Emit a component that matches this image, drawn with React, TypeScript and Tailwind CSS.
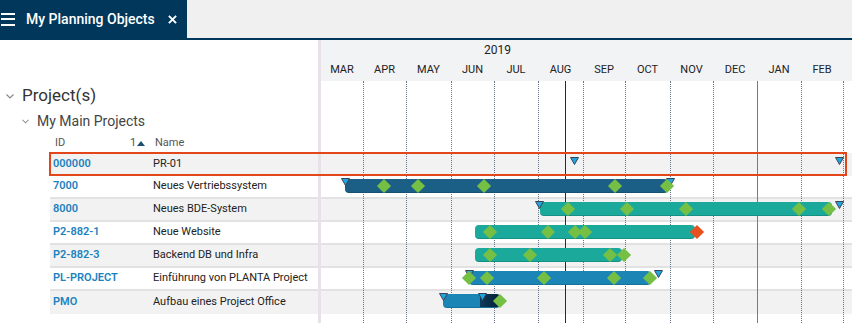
const NAVY = "#00375b";
const TEAL = "#1ba99c";
const BLUE = "#1b86b6";
const DARK = "#1b5e86";

const months: [string, number][] = [
  ["MAR", 42],
  ["APR", 43],
  ["MAY", 45],
  ["JUN", 43],
  ["JUL", 44],
  ["AUG", 45],
  ["SEP", 42],
  ["OCT", 45],
  ["NOV", 43],
  ["DEC", 44],
  ["JAN", 44],
  ["FEB", 42],
  ["", 9],
];

// month boundaries in gantt coordinates
const gridLines = months.slice(0, -1).reduce<number[]>((acc, [, w]) => {
  acc.push((acc[acc.length - 1] ?? 0) + w);
  return acc;
}, []);

type Row = {
  id: string;
  name: string;
  bar?: { left: number; width: number; color: string };
  fade?: boolean;
  tris?: number[];
  triTop?: number;
  dias?: number[];
  reds?: number[];
};

const rows: Row[] = [
  { id: "000000", name: "PR-01", tris: [253, 518], triTop: 4 },
  {
    id: "7000",
    name: "Neues Vertriebssystem",
    bar: { left: 24, width: 323, color: DARK },
    tris: [24, 349],
    dias: [63, 97, 163, 294, 346],
  },
  {
    id: "8000",
    name: "Neues BDE-System",
    bar: { left: 219, width: 292, color: TEAL },
    tris: [218, 518],
    dias: [247, 306, 365, 478, 508],
  },
  {
    id: "P2-882-1",
    name: "Neue Website",
    bar: { left: 154, width: 220, color: TEAL },
    dias: [169, 227, 254, 264],
    reds: [376],
  },
  {
    id: "P2-882-3",
    name: "Backend DB und Infra",
    bar: { left: 154, width: 147, color: TEAL },
    dias: [169, 209, 289, 303],
  },
  {
    id: "PL-PROJECT",
    name: "Einführung von PLANTA Project",
    bar: { left: 148, width: 182, color: BLUE },
    tris: [148, 337],
    dias: [148, 166, 223, 293, 329],
  },
  {
    id: "PMO",
    name: "Aufbau eines Project Office",
    bar: { left: 122, width: 57, color: BLUE },
    fade: true,
    tris: [122, 161],
    dias: [179],
  },
];

function Chevron({ className }: { className: string }) {
  return (
    <svg viewBox="0 0 8 5" className={className} fill="none" stroke="#8a8a8a" strokeWidth="1.2">
      <path d="M0.5 0.5 L4 4 L7.5 0.5" />
    </svg>
  );
}

function Tri({ x, top }: { x: number; top: number }) {
  return (
    <svg
      viewBox="0 0 9 8"
      className="absolute z-10 h-[8px] w-[9px]"
      style={{ left: x - 4.5, top }}
    >
      <polygon points="0.5,0.5 8.5,0.5 4.5,7.5" fill="#1ea5e2" stroke="#3b4550" strokeWidth="1" />
    </svg>
  );
}

function Diamond({ x, red }: { x: number; red?: boolean }) {
  return (
    <div
      className={`absolute top-[5px] z-10 h-[10px] w-[10px] rotate-45 ${red ? "bg-[#e8501f]" : "bg-[#74bf44]"}`}
      style={{ left: x - 5 }}
    />
  );
}

export default function App() {
  return (
    <div className="flex h-[323px] w-[852px] flex-col overflow-hidden bg-white font-['Roboto',sans-serif]">
      {/* top tab bar */}
      <div className="flex h-[38px] shrink-0">
        <div className="flex w-[187px] items-center text-white" style={{ backgroundColor: NAVY }}>
          <div className="ml-[1px] flex w-[14px] flex-col gap-[3.5px]">
            <span className="h-[2px] bg-white" />
            <span className="h-[2px] bg-white" />
            <span className="h-[2px] bg-white" />
          </div>
          <span className="ml-[11px] whitespace-nowrap text-[14px] font-medium">My Planning Objects</span>
          <svg viewBox="0 0 10 10" className="ml-[13px] h-[9px] w-[9px]" stroke="white" strokeWidth="2.2">
            <path d="M1 1 L9 9 M9 1 L1 9" />
          </svg>
        </div>
        <div className="flex-1 bg-[#f0f0f0]" />
      </div>
      <div className="h-[2px] shrink-0" style={{ backgroundColor: NAVY }} />

      {/* body */}
      <div className="relative flex flex-1">
        {/* left tree / table */}
        <div className="w-[318px] shrink-0">
          <div className="h-[43px]" />
          <div className="flex h-[26px] items-center">
            <Chevron className="ml-[6px] h-[5px] w-[8px]" />
            <span className="ml-[8px] text-[17px] text-[#333]">Project(s)</span>
          </div>
          <div className="flex h-[24px] items-center">
            <Chevron className="ml-[22px] h-[5px] w-[7px]" />
            <span className="ml-[8px] text-[14px] text-[#444]">My Main Projects</span>
          </div>
          <div className="flex h-[20px] items-center pl-[55px] text-[11px] text-[#555]">
            <span className="w-[75px]">ID</span>
            <span className="flex w-[25px] items-center">
              1
              <svg viewBox="0 0 8 5" className="ml-[1px] h-[5px] w-[8px]">
                <polygon points="0,5 8,5 4,0" fill="#1d4f73" />
              </svg>
            </span>
            <span>Name</span>
          </div>
          {rows.map((r, i) => (
            <div
              key={r.id}
              className={`ml-[50px] flex h-[23px] items-center whitespace-nowrap text-[11px] ${i % 2 === 0 ? "bg-[#f2f2f2]" : "bg-white"} ${i > 0 && i < rows.length - 1 ? "border-b-2 border-[#e2e2e2]" : ""}`}
            >
              <span className="w-[103px] pl-[3px] font-semibold text-[#1b82bf]">{r.id}</span>
              <span className="text-[#222]">{r.name}</span>
            </div>
          ))}
        </div>

        {/* splitter */}
        <div className="w-[3px] shrink-0 bg-[#e8e1ea]" />

        {/* gantt */}
        <div className="flex flex-1 flex-col">
          <div className="h-[41px] shrink-0 bg-[#f2f3f5] text-[#222]">
            <div className="flex h-[20px] items-center pl-[163px] text-[12px]">2019</div>
            <div className="flex h-[21px] items-center text-[11px]">
              {months.map(([m, w], i) => (
                <div key={i} className="shrink-0 text-center" style={{ width: w }}>
                  {m}
                </div>
              ))}
            </div>
          </div>
          <div className="relative flex-1">
            <div className="h-[72px]" />
            {rows.map((r, i) => (
              <div
                key={r.id}
                className={`relative h-[23px] ${i % 2 === 0 ? "bg-[#f2f2f2]" : "bg-white"} ${i > 0 && i < rows.length - 1 ? "border-b-2 border-[#e2e2e2]" : ""}`}
              >
                {r.bar && (
                  <div
                    className="absolute top-[3px] z-10 h-[14px] overflow-hidden rounded-[4px] border-b border-black/15"
                    style={{ left: r.bar.left, width: r.bar.width, backgroundColor: r.bar.color }}
                  >
                    {r.fade && (
                      <div className="absolute inset-y-0 right-0 w-[20px] bg-gradient-to-r from-[#0e3b5c] to-[#061e33]" />
                    )}
                  </div>
                )}
                {r.tris?.map((x) => <Tri key={x} x={x} top={r.triTop ?? 2} />)}
                {r.dias?.map((x) => <Diamond key={x} x={x} />)}
                {r.reds?.map((x) => <Diamond key={x} x={x} red />)}
              </div>
            ))}
            {gridLines.map((x, i) => (
              <div
                key={x}
                className={`absolute inset-y-0 w-0 border-l ${i === 9 ? "border-solid border-[#737b8c]" : "border-dotted border-[#66758a]"}`}
                style={{ left: x }}
              />
            ))}
            <div className="absolute inset-y-0 left-[244px] w-0 border-l border-[#5c1414]" />
          </div>
        </div>

        {/* selected row highlight */}
        <div className="pointer-events-none absolute left-[49px] top-[112px] z-20 h-[24px] w-[798px] border-2 border-[#e4461c]" />
      </div>
    </div>
  );
}
